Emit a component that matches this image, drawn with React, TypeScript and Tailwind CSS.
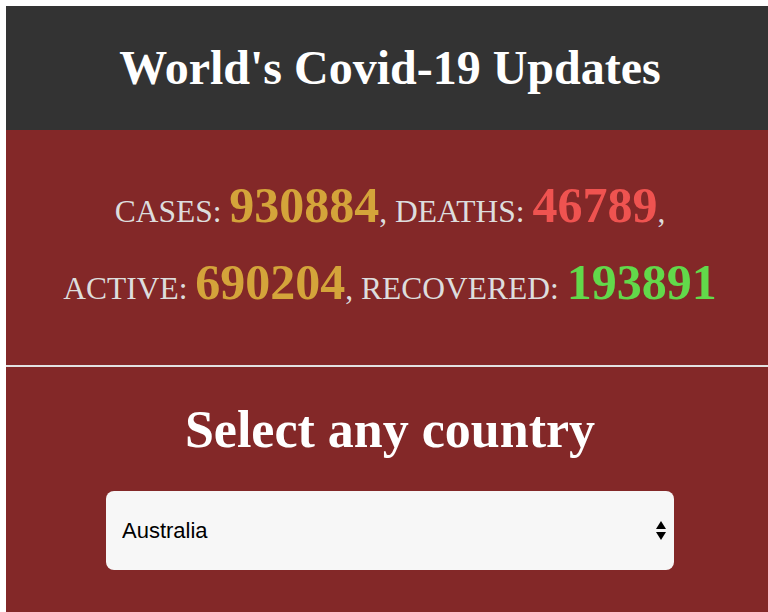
import { useState } from 'react'

const countries = ['Australia', 'Brazil', 'Canada', 'China', 'France', 'Germany', 'India', 'Italy', 'Spain', 'United Kingdom', 'United States']

const stats = {
  cases: 930884,
  deaths: 46789,
  active: 690204,
  recovered: 193891,
}

function Stat({ label, value, color, comma }: { label: string; value: number; color: string; comma?: boolean }) {
  return (
    <>
      {label}: <span className={`text-[50px] font-bold ${color}`}>{value}</span>
      {comma && ','}
    </>
  )
}

export default function App() {
  const [country, setCountry] = useState('Australia')

  return (
    <div className="w-full min-h-screen overflow-hidden bg-white pt-[6px]">
      <div className="ml-[6px] w-[768px] font-['Liberation_Serif',serif]">
        {/* Header */}
        <div className="h-[124px] bg-[#333333] flex items-center justify-center">
          <h1 className="text-[48px] font-bold text-white leading-none">World's Covid-19 Updates</h1>
        </div>

        {/* Global totals */}
        <div className="bg-[#832828] pt-[40px] pb-[41px] text-center text-[31.5px] leading-[70px] text-[#dddddd]">
          <div>
            <Stat label="CASES" value={stats.cases} color="text-[#d4a43a]" comma />{' '}
            <Stat label="DEATHS" value={stats.deaths} color="text-[#ef5350]" comma />
          </div>
          <div>
            <Stat label="ACTIVE" value={stats.active} color="text-[#d4a43a]" comma />{' '}
            <Stat label="RECOVERED" value={stats.recovered} color="text-[#62d94a]" />
          </div>
        </div>

        <div className="h-[2px] bg-[#e2e2e2]" />

        {/* Country picker */}
        <div className="bg-[#832828] pt-[37px] pb-[60px] flex flex-col items-center">
          <h2 className="text-[52px] font-bold text-white leading-none">Select any country</h2>
          <div className="relative mt-[35px] w-[568px]">
            <select
              value={country}
              onChange={(e) => setCountry(e.target.value)}
              className="w-full h-[79px] appearance-none rounded-lg bg-[#f7f7f7] pl-4 pr-10 text-[22px] text-black font-['Liberation_Sans',Arial,sans-serif] outline-none"
            >
              {countries.map((c) => (
                <option key={c} value={c}>
                  {c}
                </option>
              ))}
            </select>
            <svg className="pointer-events-none absolute right-[8px] top-[30px]" width="10" height="19" viewBox="0 0 10 19">
              <path d="M5 0 L10 8 L0 8 Z" fill="black" />
              <path d="M0 11 L10 11 L5 19 Z" fill="black" />
            </svg>
          </div>
        </div>
      </div>
    </div>
  )
}
